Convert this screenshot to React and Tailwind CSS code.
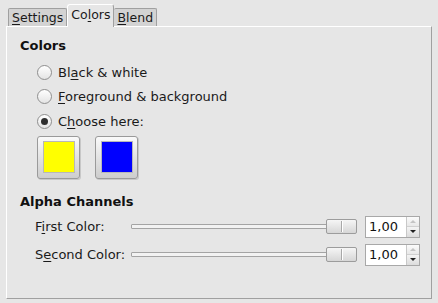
import React from 'react';

const font = { fontFamily: '"DejaVu Sans", Verdana, sans-serif' };

const U = ({ children }) => <span className="underline underline-offset-[2px]">{children}</span>;

const Radio = ({ checked, children }) => (
    <div className="flex items-center h-[24.5px]">
        <div className="w-[15px] h-[15px] rounded-full border border-[#8f8f8f] bg-gradient-to-b from-[#ffffff] to-[#e4e4e4] flex items-center justify-center">
            {checked && <div className="w-[7px] h-[7px] rounded-full bg-[#2e2e2e]" />}
        </div>
        <span className="ml-[6px] text-[13px] text-[#1a1a1a]">{children}</span>
    </div>
);

const ColorButton = ({ color }) => (
    <div className="w-[43px] h-[43px] rounded-[3px] border border-[#9a9a9a] bg-gradient-to-b from-[#fafafa] to-[#cdcdcd] flex items-center justify-center shadow-[1px_1px_0_#c8c8c8]">
        <div className={`w-[32px] h-[32px] border border-[#b8b8b8] ${color}`} />
    </div>
);

const SliderRow = ({ label }) => (
    <div className="flex items-center h-[28px]">
        <span className="w-[96px] text-[13px] text-[#1a1a1a]">{label}</span>
        <div className="flex items-center w-[226px]">
            <div className="flex-1 h-[5px] border border-[#a4a4a4] bg-[#f2f2f2] rounded-[1px]" />
            <div className="w-[31px] h-[15px] rounded-[2px] border border-[#9c9c9c] bg-gradient-to-b from-[#f6f6f6] to-[#d6d6d6] flex justify-center items-center -ml-px">
                <div className="w-px h-[11px] bg-[#a8a8a8]" />
                <div className="w-px h-[11px] bg-white" />
            </div>
        </div>
        <div className="ml-[8px] flex h-[22px] border border-[#a8a8a8] bg-white">
            <div className="w-[40px] pl-[3px] text-[13px] leading-[20px] text-[#111]">1,00</div>
            <div className="w-[13px] flex flex-col border-l border-[#c8c8c8]">
                <div className="h-[10px] flex items-center justify-center bg-gradient-to-b from-[#fbfbfb] to-[#e8e8e8] border-b border-[#d0d0d0]">
                    <div className="w-0 h-0 border-l-[3px] border-r-[3px] border-b-[3px] border-l-transparent border-r-transparent border-b-[#c4c4c4]" />
                </div>
                <div className="flex-1 flex items-center justify-center bg-gradient-to-b from-[#f4f4f4] to-[#dcdcdc]">
                    <div className="w-0 h-0 border-l-[3px] border-r-[3px] border-t-[3px] border-l-transparent border-r-transparent border-t-[#202020]" />
                </div>
            </div>
        </div>
    </div>
);

export default function App() {
    return (
        <div className="w-[438px] h-[303px] bg-[#e6e6e6] overflow-hidden" style={font}>
            {/* Tabs */}
            <div className="flex items-end h-[26px] pl-[8px]">
                <div className="h-[18px] px-[3px] border border-b-0 border-[#a0a0a0] bg-[#d3d3d3] text-[12.5px] leading-[18px] text-[#1a1a1a] rounded-t-[2px]">
                    <U>S</U>ettings
                </div>
                <div className="h-[23px] px-[3px] border-t border-l border-white border-r border-r-[#a0a0a0] bg-[#e6e6e6] text-[12.5px] leading-[20px] text-[#1a1a1a] rounded-t-[3px] -mb-px relative z-10">
                    Co<U>l</U>ors
                </div>
                <div className="h-[18px] px-[3px] border border-b-0 border-l-0 border-[#a0a0a0] bg-[#d3d3d3] text-[12.5px] leading-[18px] text-[#1a1a1a] rounded-t-[2px]">
                    <U>B</U>lend
                </div>
            </div>

            {/* Panel */}
            <div className="ml-[6px] w-[426px] h-[273px] border-t border-l border-white border-r border-b border-r-[#a0a0a0] border-b-[#a0a0a0] pl-[13px] pt-[11px]">
                <div className="h-[16px] text-[13px] leading-[16px] font-bold text-[#111]">Colors</div>
                <div className="mt-[6px] pl-[17px]">
                    <Radio>Bl<U>a</U>ck &amp; white</Radio>
                    <Radio><U>F</U>oreground &amp; background</Radio>
                    <Radio checked>C<U>h</U>oose here:</Radio>
                    <div className="flex gap-[15px] mt-[2px]">
                        <ColorButton color="bg-[#ffff00]" />
                        <ColorButton color="bg-[#0000ff]" />
                    </div>
                </div>
                <div className="mt-[15px] h-[16px] text-[13px] leading-[16px] font-bold text-[#111]">Alpha Channels</div>
                <div className="mt-[3px] pl-[15px]">
                    <SliderRow label={<>F<U>i</U>rst Color:</>} />
                    <SliderRow label={<>S<U>e</U>cond Color:</>} />
                </div>
            </div>
        </div>
    );
}
